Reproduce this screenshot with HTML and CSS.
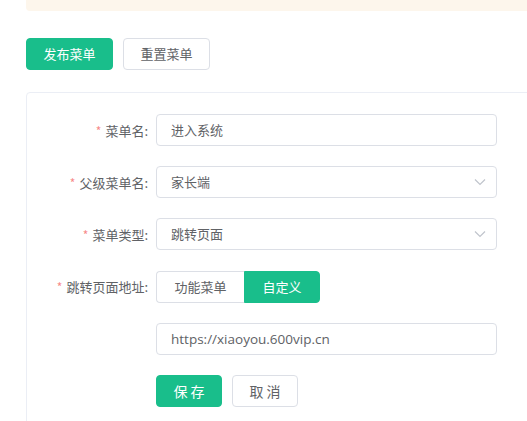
FILE: index.html
```html
<!DOCTYPE html>
<html lang="zh-CN">
<head>
<meta charset="utf-8">
<title>菜单设置</title>
<link rel="stylesheet" href="styles.css">
</head>
<body>
<div class="page">
  <div class="alert">菜单发布后需重新进入公众号生效。</div>
  <div class="toolbar">
    <button class="btn btn-primary">发布菜单</button>
    <button class="btn btn-default">重置菜单</button>
  </div>
  <div class="card">
    <form class="form">
      <div class="form-item">
        <label class="label"><span class="req">*</span>菜单名:</label>
        <div class="control"><div class="input">进入系统</div></div>
      </div>
      <div class="form-item">
        <label class="label"><span class="req">*</span>父级菜单名:</label>
        <div class="control"><div class="input select">家长端
          <svg class="arrow" width="12" height="8" viewBox="0 0 12 8"><path d="M1 1.5 L6 6.5 L11 1.5" fill="none" stroke="#c0c4cc" stroke-width="1.2"/></svg></div></div>
      </div>
      <div class="form-item">
        <label class="label"><span class="req">*</span>菜单类型:</label>
        <div class="control"><div class="input select">跳转页面
          <svg class="arrow" width="12" height="8" viewBox="0 0 12 8"><path d="M1 1.5 L6 6.5 L11 1.5" fill="none" stroke="#c0c4cc" stroke-width="1.2"/></svg></div></div>
      </div>
      <div class="form-item">
        <label class="label"><span class="req">*</span>跳转页面地址:</label>
        <div class="control">
          <div class="radio-group">
            <span class="radio">功能菜单</span>
            <span class="radio active">自定义</span>
          </div>
        </div>
      </div>
      <div class="form-item">
        <label class="label"></label>
        <div class="control"><div class="input url">https://xiaoyou.600vip.cn</div></div>
      </div>
      <div class="form-item">
        <label class="label"></label>
        <div class="control actions">
          <button type="button" class="btn btn-primary btn-sm">保 存</button>
          <button type="button" class="btn btn-default btn-sm">取 消</button>
        </div>
      </div>
    </form>
  </div>
</div>
</body>
</html>
```
FILE: styles.css
```css
* { box-sizing: border-box; }
html, body { margin: 0; padding: 0; background: #fff; overflow: hidden; }
body {
  font-family: "Noto Sans CJK SC", "Open Sans", sans-serif;
  color: #606266;
  font-size: 14px;
}
.page {
  padding-left: 26px;
  width: 560px;
}
.alert {
  margin-top: -24px;
  height: 35px;
  background: #fdf6ec;
  color: #e6a23c;
  font-size: 13px;
  line-height: 16px;
  padding: 9px 22px;
  border-radius: 4px;
}
.toolbar {
  display: flex;
  gap: 10px;
  margin-top: 27px;
}
.btn {
  font-family: inherit;
  height: 32px;
  width: 87px;
  border-radius: 4px;
  font-size: 13px;
  padding: 0;
  cursor: pointer;
  line-height: 30px;
}
.btn-primary {
  background: #19be8b;
  border: 1px solid #19be8b;
  color: #fff;
}
.btn-default {
  background: #fff;
  border: 1px solid #dcdfe6;
  color: #606266;
}
.btn-sm {
  width: 66px;
  font-size: 14px;
}
.card {
  margin-top: 22px;
  border: 1px solid #ebeef5;
  border-radius: 4px;
  min-height: 340px;
  padding-top: 21px;
}
.form { display: flex; flex-direction: column; gap: 20.2px; }
.form-item {
  display: flex;
  align-items: center;
  height: 32px;
}
.label {
  width: 129px;
  text-align: right;
  padding-right: 8px;
  font-size: 13px;
  color: #606266;
  flex: none;
}
.req { color: #f78989; margin-right: 4px; font-size: 12px; }
.control { width: 341px; flex: none; }
.input {
  height: 32px;
  border: 1px solid #dcdfe6;
  border-radius: 4px;
  padding: 0 14px;
  line-height: 30px;
  font-size: 13px;
  color: #606266;
  display: flex;
  align-items: center;
  justify-content: space-between;
}
.input.url { font-family: "Open Sans", "Noto Sans CJK SC", sans-serif; font-size: 13.5px; }
.arrow { margin-right: -4px; }
.radio-group { display: flex; }
.radio {
  height: 32px;
  line-height: 30px;
  font-size: 13px;
  border: 1px solid #dcdfe6;
  color: #606266;
  padding: 0;
  text-align: center;
}
.radio:first-child { width: 88px; border-radius: 4px 0 0 4px; border-right: none; }
.radio.active {
  width: 76px;
  background: #19be8b;
  border-color: #19be8b;
  color: #fff;
  border-radius: 0 4px 4px 0;
}
.actions { display: flex; gap: 10px; }
```
